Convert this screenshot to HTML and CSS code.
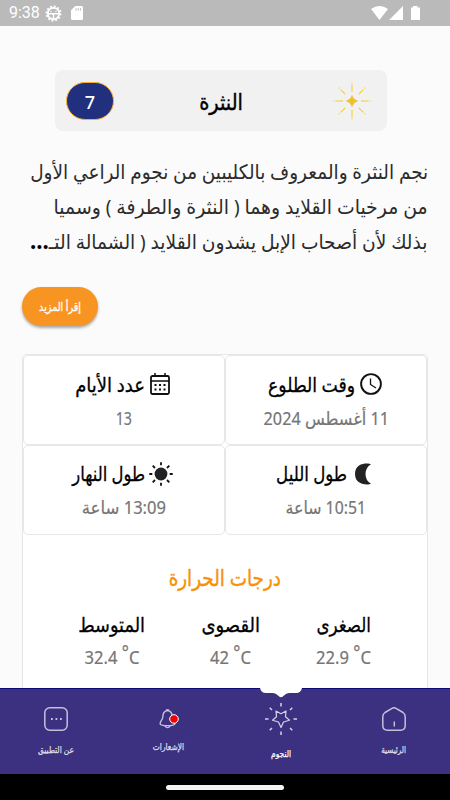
FILE: index.html
```html
<!DOCTYPE html>
<html lang="ar" dir="rtl">
<head>
<meta charset="utf-8">
<meta name="viewport" content="width=device-width">
<title>النثرة</title>
<link rel="stylesheet" href="styles.css">
</head>
<body>
<header class="status" dir="ltr">
  <span class="time">9:38</span>
  <svg class="gear" width="17" height="17" viewBox="0 0 17 17"><circle cx="8.500" cy="8.500" r="7" fill="none" stroke="#fff" stroke-width="2" stroke-dasharray="1.9 1.765"/><circle cx="8.500" cy="8.500" r="5.700" fill="none" stroke="#fff" stroke-width="1.700"/><path d="M3 8.800h11M8.500 9v5M5.500 6.500h1M10.500 6.500h1" stroke="#fff" stroke-width="1.400"/></svg>
  <svg class="sd" width="12" height="14" viewBox="0 0 12 14"><path d="M4.300 0H10.500Q12 0 12 1.500V12.500Q12 14 10.500 14H1.500Q0 14 0 12.500V4.300Z" fill="#fff"/><path d="M5 2.200v2.300M7.300 2.200v2.300M9.600 2.200v2.300" stroke="#bababa"/></svg>
  <svg class="signals" width="50" height="15" viewBox="0 0 50 15"><path d="M0 3Q8.500-3 17 3L8.500 14ZM18 14L32 0V14ZM40 1.500H42V0H46.500V1.500H49V14H40Z" fill="#fff"/></svg>
</header>
<main>
  <section class="title-card">
    <svg class="spark" width="38" height="38" viewBox="-19 -19 38 38"><path d="M0-6.500Q1.300-1.300 6.500 0Q1.300 1.300 0 6.500Q-1.300 1.300-6.500 0Q-1.300-1.300 0-6.500Z" fill="#f0c030"/><g stroke="#f2d02e" stroke-width="1.100"><path d="M0-9v-7.500M0 9v7.500M-9 0h-7.500M9 0h7.500M6.800-6.800l4.500-4.500M6.800 6.800l4.500 4.500M-6.800-6.800l-4.500-4.500M-6.800 6.800l-4.500 4.500"/><path d="M0-17.500v-1M0 17.500v1M-17.500 0h-1M17.500 0h1M12.500-12.500l.8-.8M12.500 12.500l.8.8M-12.500-12.500l-.8-.8M-12.500 12.500l-.8.8"/></g></svg>
    <h1><span class="fit f-title">النثرة</span></h1>
    <span class="badge">7</span>
  </section>
  <p class="story">
    <span class="fit f-line1">نجم النثرة والمعروف بالكليبين من نجوم الراعي الأول</span>
    <span class="fit f-line2">من مرخيات القلايد وهما ( النثرة والطرفة ) وسميا</span>
    <span class="fit f-line3">بذلك لأن أصحاب الإبل يشدون القلايد ( الشمالة التـ<b>...</b></span>
  </p>
  <button class="more"><span class="fit f-more">إقرأ المزيد</span></button>
  <section class="panel">
    <div class="grid">
      <article class="cell">
        <h2><svg width="22" height="22" viewBox="0 0 22 22" fill="none" stroke="#111"><circle cx="11" cy="11" r="9.900" stroke-width="1.900"/><path d="M10.500 5.500V11.500L16 15" stroke-width="1.300"/></svg><span class="fit f-rise">وقت الطلوع</span></h2>
        <p><span class="fit f-date">11 أغسطس 2024</span></p>
      </article>
      <article class="cell days">
        <h2><svg width="20" height="22" viewBox="0 0 20 22" fill="none" stroke="#111"><rect x="1" y="3" width="18" height="18" rx="1.500" stroke-width="1.800"/><path d="M1 8H19M5 0V4M15 0V4" stroke-width="1.500"/><path d="M4.500 12h11M4.500 16.500h11" stroke-width="2" stroke-dasharray="2 2.500"/></svg><span class="fit f-days">عدد الأيام</span></h2>
        <p><span class="fit f-13">13</span></p>
      </article>
      <article class="cell night">
        <h2><svg width="16" height="22" viewBox="0 0 16 22"><path d="M16 1.200C13-.2 0-.5 0 11S13 22.200 16 20.800Q10.500 17.500 10.500 11T16 1.200Z" fill="#222"/></svg><span class="fit f-night">طول الليل</span></h2>
        <p><span class="fit f-night-v">10:51 ساعة</span></p>
      </article>
      <article class="cell day">
        <h2><svg width="24" height="24" viewBox="-12 -12 24 24"><circle r="6.400" fill="#222"/><path d="M0-8.700v-3M0 8.700v3M-8.700 0h-3M8.700 0h3M6-6l2.300-2.300M6 6l2.300 2.300M-6-6l-2.300-2.300M-6 6l-2.300 2.300" stroke="#111" stroke-width="1.800"/></svg><span class="fit f-day">طول النهار</span></h2>
        <p><span class="fit f-day-v">13:09 ساعة</span></p>
      </article>
    </div>
    <h3><span class="fit f-temp">درجات الحرارة</span></h3>
    <div class="temps">
      <div><h4><span class="fit f-min">الصغرى</span></h4><p dir="ltr">22.9 <i>°</i>C</p></div>
      <div><h4><span class="fit f-max">القصوى</span></h4><p dir="ltr">42 <i>°</i>C</p></div>
      <div><h4><span class="fit f-avg">المتوسط</span></h4><p dir="ltr">32.4 <i>°</i>C</p></div>
    </div>
  </section>
</main>
<nav>
  <a class="home"><svg width="24" height="24" viewBox="0 0 24 24" fill="none" stroke="#c4c0dc" stroke-width="1.500"><path d="M10 1.300Q12 .2 14 1.300L21 5.500Q23.200 7 23.200 9.500V18.500Q23.200 23.200 18.500 23.200H5.500Q.8 23.200 .8 18.500V9.500Q.8 7 3 5.500Z"/><path d="M12.300 14.500v5"/></svg><span class="fit f-home">الرئيسية</span></a>
  <a class="stars"><svg width="32" height="32" viewBox="-16 -16 32 32" fill="none" stroke="#d5d2e8" stroke-width="1.200" stroke-linejoin="round"><path d="M0 8.500L-2.500 3L-8.500 1.200L-4.500-2.200L-5-8L0-5.300L5-8L4.500-2.200L8.500 1.200L2.500 3Z"/><path d="M0-12.500v-3.500M0 12.500v3.500M-12.500 0h-3.500M12.500 0h3.500M9-9l2.300-2.300M9 9l2.300 2.300M-9-9l-2.300-2.300M-9 9l-2.300 2.300" stroke-width="1.500"/></svg><span class="fit f-stars">النجوم</span></a>
  <a class="alerts"><svg width="21" height="20" viewBox="0 0 21 20"><path d="M8.500 1.500C5 2 3.800 4.500 3.800 8C3.800 11-.2 13.500 1.500 15.500C3.500 17 13.500 17 15.500 15.500C17 14 13.300 11 13.300 8C13.300 4.500 12 2 8.500 1.500ZM5.800 16.800Q8.500 20.500 11.300 16.800M7 1.500Q8.500 0 10 1.500" fill="none" stroke="#c4c0dc" stroke-width="1.400"/><circle cx="15" cy="10" r="4.300" fill="#f50000" stroke="#fff"/></svg><span class="fit f-alerts">الإشعارات</span></a>
  <a class="about"><svg width="24" height="24" viewBox="0 0 24 24" fill="none" stroke="#c4c0dc"><rect x=".8" y=".8" width="22.400" height="22.400" rx="5" stroke-width="1.500"/><path d="M7 12h11" stroke-width="1.800" stroke-dasharray="1.800 2.700"/></svg><span class="fit f-about">عن التطبيق</span></a>
  <svg class="notch" width="42" height="10" viewBox="0 0 42 10"><path d="M0 0H42Q41 5 36 5H29Q26 5 24 7.500Q21 11 18 7.500Q16 5 13 5H6Q1 5 0 0Z" fill="#fff"/></svg>
</nav>
<footer><span></span></footer>
</body>
</html>
```
FILE: styles.css
```css
* { box-sizing: border-box; }
body { margin: 0; width: 450px; height: 800px; overflow: hidden; display: flex; flex-direction: column; background: #fbfbfb; color: #000; font-family: "Noto Sans", "DejaVu Sans", sans-serif; }
h1, h2, h3, h4, p { margin: 0; font-weight: 400; }

/* condensed labels: width is the drawn width, scaleX squeezes the glyphs into it */
.fit { display: inline-block; white-space: nowrap; transform-origin: right; text-align: right; }
.f-title { width: 43px; transform: scaleX(.88); }
.f-line1 { transform: scaleX(.923); }
.f-line2 { transform: scaleX(.943); }
.f-line3 { transform: scaleX(.932); }
.f-more { width: 42px; transform: scaleX(.8); }
.f-rise { width: 87px; transform: scaleX(.861); }
.f-days { width: 70px; transform: scaleX(.9); }
.f-night { width: 71px; transform: scaleX(.83); }
.f-day { width: 73px; transform: scaleX(.82); }
.f-date { width: 126px; transform: scaleX(.9); }
.f-13 { width: 16px; transform: scaleX(.79); }
.f-night-v { width: 79px; transform: scaleX(.878); }
.f-day-v { width: 84px; transform: scaleX(.92); }
.f-temp { width: 112px; transform: scaleX(.835); }
.f-min { width: 54px; transform: scaleX(.834); }
.f-max { width: 58px; transform: scaleX(.9); }
.f-avg { width: 66px; transform: scaleX(.887); }
.f-home { width: 25px; transform: scaleX(.8); }
.f-stars { width: 20px; transform: scaleX(.83); }
.f-alerts { width: 31px; transform: scaleX(.83); }
.f-about { width: 36px; transform: scaleX(.84); }

.status { height: 26px; flex: none; background: #bababa; display: flex; align-items: center; padding: 0 29px 0 9px; color: #fff; font: 16px/26px Roboto, sans-serif; }
.gear { margin-left: 5px; }
.sd { margin-left: 9px; }
.signals { margin-left: auto; }
main { height: 662px; flex: none; overflow: hidden; padding: 44px 22px 0; }
.title-card { height: 61px; margin: 0 41px 0 33px; padding: 0 11px; border-radius: 8px; background: #f1f1f1; display: grid; grid-template-columns: 48px 1fr 48px; align-items: center; }
.spark { margin-right: 5px; }
h1 { text-align: center; font-size: 22px; line-height: 40px; -webkit-text-stroke: .4px; }
.badge { height: 38px; border-radius: 19px; border: 1.500px solid #f5ad2b; background: #20307f; color: #fff; text-align: center; font: 500 18px/38px "Noto Sans", sans-serif; }
.story { margin-top: 23px; height: 106px; font-size: 20px; line-height: 35px; color: #2c2c2c; }
.story .fit { display: block; width: max-content; }
.story b { font-size: 24px; line-height: 10px; color: #000; }
.more { display: block; width: 76px; height: 39px; margin: 27px auto 0 0; padding: 0; border: 0; border-radius: 20px; background: #f89522; color: #fff; box-shadow: 0 2px 3px #0005; font: 12px/39px "Noto Sans", "DejaVu Sans", sans-serif; text-align: center; -webkit-text-stroke: .3px; }
.panel { margin-top: 28px; height: 360px; border: 1px solid #e6e6e6; border-radius: 5px 5px 0 0; background: #fff; }
.grid { display: grid; grid-template-columns: 1fr 1fr; grid-auto-rows: 90px; }
.cell { border: 1.500px solid #e7e7e7; border-radius: 5px; padding-top: 12px; }
.cell h2 { height: 34px; display: flex; justify-content: center; align-items: flex-start; padding: 4px 2px 0 0; gap: 5px; font-size: 20px; line-height: 26px; -webkit-text-stroke: .3px; }
.cell h2 svg { margin-top: 1px; }
.cell p { text-align: center; color: #757575; font-size: 18px; line-height: 32px; -webkit-text-stroke: .2px; }
.days h2 { padding-right: 3px; }
.night, .day { padding-top: 11px; }
.night h2 { gap: 8px; padding-right: 5px; }
.night h2 svg { margin-top: 2px; }
.day h2 { gap: 4px; padding-right: 3px; }
h3 { margin-top: 24px; text-align: center; color: #f89109; font-size: 22px; line-height: 36px; -webkit-text-stroke: .4px; }
.temps { display: grid; grid-template-columns: 113px 113px 124px; justify-content: center; margin-top: 14px; text-align: center; }
h4 { font-size: 20px; line-height: 32px; -webkit-text-stroke: .3px; }
.temps p { color: #757575; font-size: 18px; line-height: 33px; transform: scaleX(.92); -webkit-text-stroke: .2px; }
.temps i { font-style: normal; position: relative; top: -5px; }
nav { position: relative; height: 86px; flex: none; background: #3b3180; border-top: 1px solid #100878; display: grid; grid-template-columns: 113px 112px 113px 112px; text-align: center; color: #e0deeb; font-size: 9px; line-height: 18px; -webkit-text-stroke: .25px; }
nav a { display: flex; flex-direction: column; align-items: center; padding-top: 18px; }
nav a span { margin-top: 10px; }
nav .stars { padding-top: 14px; color: #fff; }
nav .alerts { padding-top: 20px; }
.alerts svg { margin-right: -1px; }
nav .alerts span { margin-top: 9px; }
.notch { position: absolute; left: 260px; top: -1px; }
footer { height: 26px; flex: none; background: #000; display: flex; justify-content: center; align-items: center; }
footer span { width: 118px; height: 5px; border-radius: 3px; background: #f4f4f4; }
```
